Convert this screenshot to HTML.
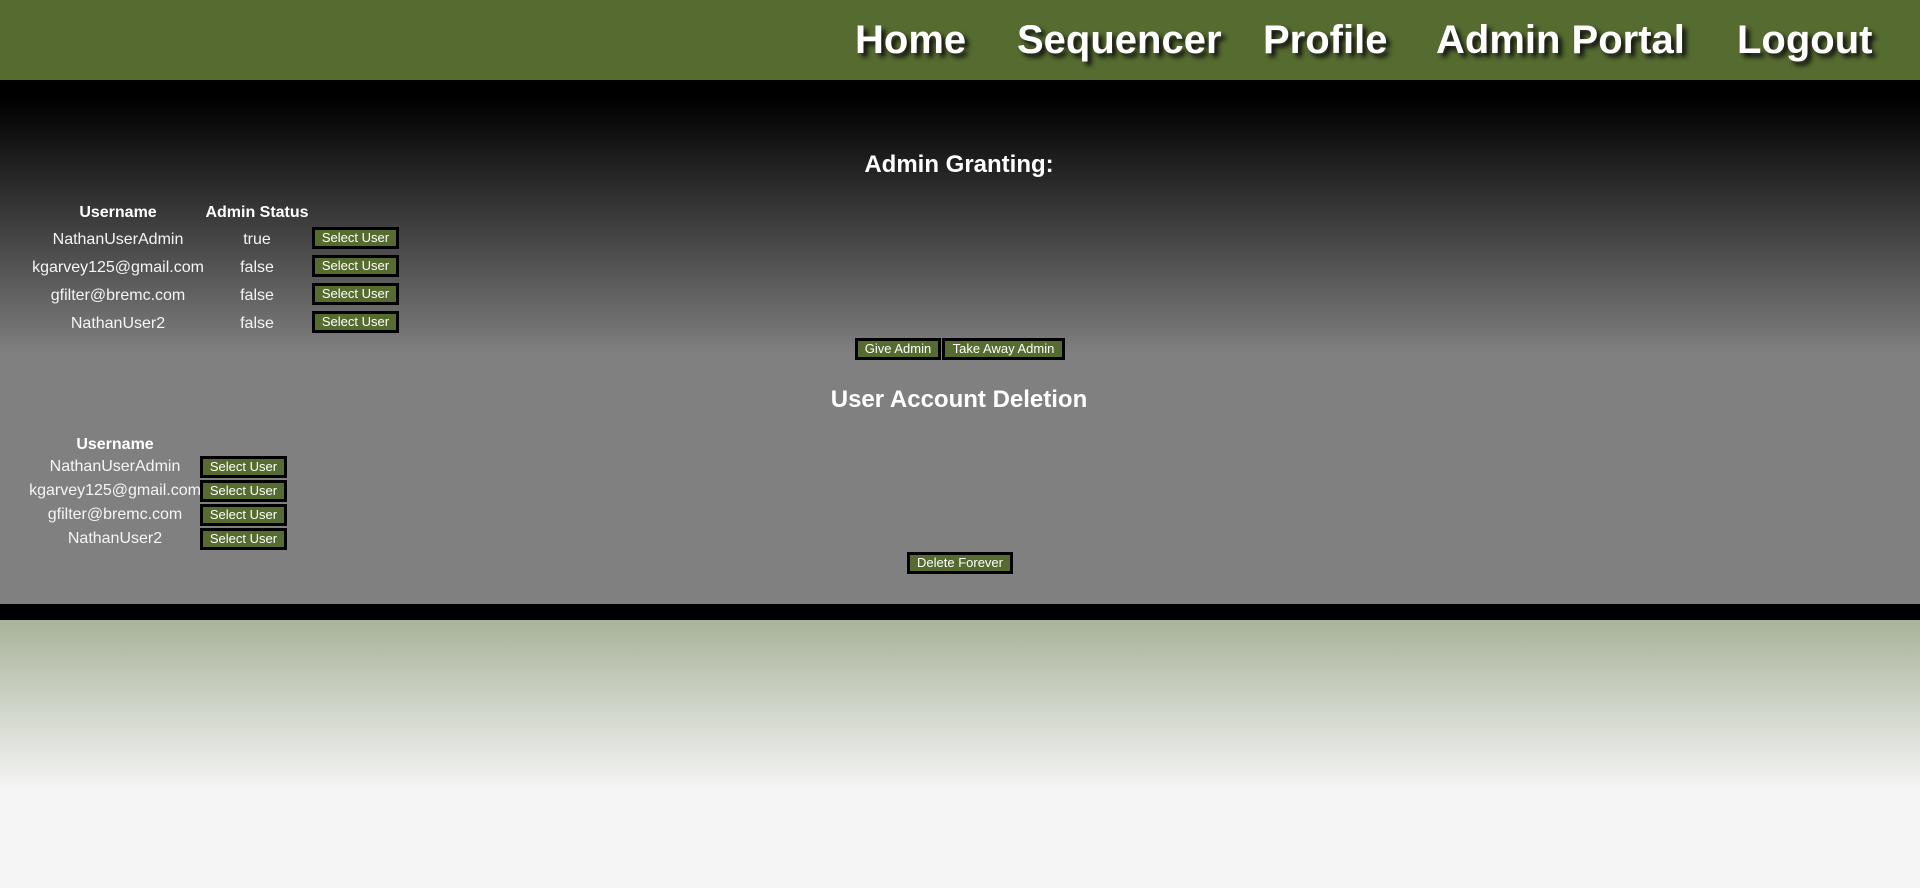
<!DOCTYPE html>
<html><head><meta charset="utf-8"><style>
*{margin:0;padding:0;box-sizing:border-box}
body{width:1920px;height:888px;overflow:hidden;font-family:"Liberation Sans",Arial,sans-serif;background:#f5f5f5;position:relative;color:#f5f5f5}
#nav{position:absolute;left:0;top:0;width:1920px;height:80px;background:#556b2f}
#nav span{position:absolute;top:18px;font-size:40px;font-weight:bold;color:#fff;text-shadow:4px 4px 5px #111;white-space:nowrap}
#main{position:absolute;left:0;top:80px;width:1920px;height:524px;background:linear-gradient(#000 0px,#000 20px,#808080 275px,#808080 524px)}
#band{position:absolute;left:0;top:604px;width:1920px;height:16px;background:#000}
#foot{position:absolute;left:0;top:620px;width:1920px;height:268px;background:linear-gradient(#a8b399 0px,#f5f5f5 170px,#f5f5f5 268px)}
.a{position:absolute;white-space:nowrap}
.c{text-align:center;transform:translateX(-50%)}
h2{position:absolute;font-size:24px;font-weight:bold;color:#fff;white-space:nowrap;transform:translateX(-50%)}
.t{font-size:16px;color:#f5f5f5}
.th{font-size:16px;font-weight:bold;color:#fff}
.b{position:absolute;height:22px;background:#556b2f;border:3px solid #000;color:#fff;font-size:13px;line-height:16px;text-align:center;white-space:nowrap}
</style></head><body>
<div id="nav">
<span style="left:855px">Home</span>
<span style="left:1017px">Sequencer</span>
<span style="left:1263px">Profile</span>
<span style="left:1436px">Admin Portal</span>
<span style="left:1737px">Logout</span>
</div>
<div id="main"></div>
<div id="band"></div>
<div id="foot"></div>

<h2 style="left:959px;top:151px">Admin Granting:</h2>
<div class="a c th" style="left:118px;top:204px">Username</div>
<div class="a c th" style="left:257px;top:204px">Admin Status</div>

<div class="a c t" style="left:118px;top:231px">NathanUserAdmin</div>
<div class="a c t" style="left:257px;top:231px">true</div>
<div class="b" style="left:312px;top:227px;width:87px">Select User</div>

<div class="a c t" style="left:118px;top:259px">kgarvey125@gmail.com</div>
<div class="a c t" style="left:257px;top:259px">false</div>
<div class="b" style="left:312px;top:255px;width:87px">Select User</div>

<div class="a c t" style="left:118px;top:287px">gfilter@bremc.com</div>
<div class="a c t" style="left:257px;top:287px">false</div>
<div class="b" style="left:312px;top:283px;width:87px">Select User</div>

<div class="a c t" style="left:118px;top:315px">NathanUser2</div>
<div class="a c t" style="left:257px;top:315px">false</div>
<div class="b" style="left:312px;top:311px;width:87px">Select User</div>

<div class="b" style="left:855px;top:338px;width:86px">Give Admin</div>
<div class="b" style="left:942px;top:338px;width:123px">Take Away Admin</div>

<h2 style="left:959px;top:386px">User Account Deletion</h2>
<div class="a c th" style="left:115px;top:436px">Username</div>
<div class="a c t" style="left:115px;top:458px">NathanUserAdmin</div>
<div class="b" style="left:200px;top:456px;width:87px">Select User</div>
<div class="a c t" style="left:115px;top:482px">kgarvey125@gmail.com</div>
<div class="b" style="left:200px;top:480px;width:87px">Select User</div>
<div class="a c t" style="left:115px;top:506px">gfilter@bremc.com</div>
<div class="b" style="left:200px;top:504px;width:87px">Select User</div>
<div class="a c t" style="left:115px;top:530px">NathanUser2</div>
<div class="b" style="left:200px;top:528px;width:87px">Select User</div>

<div class="b" style="left:907px;top:552px;width:106px">Delete Forever</div>
</body></html>
